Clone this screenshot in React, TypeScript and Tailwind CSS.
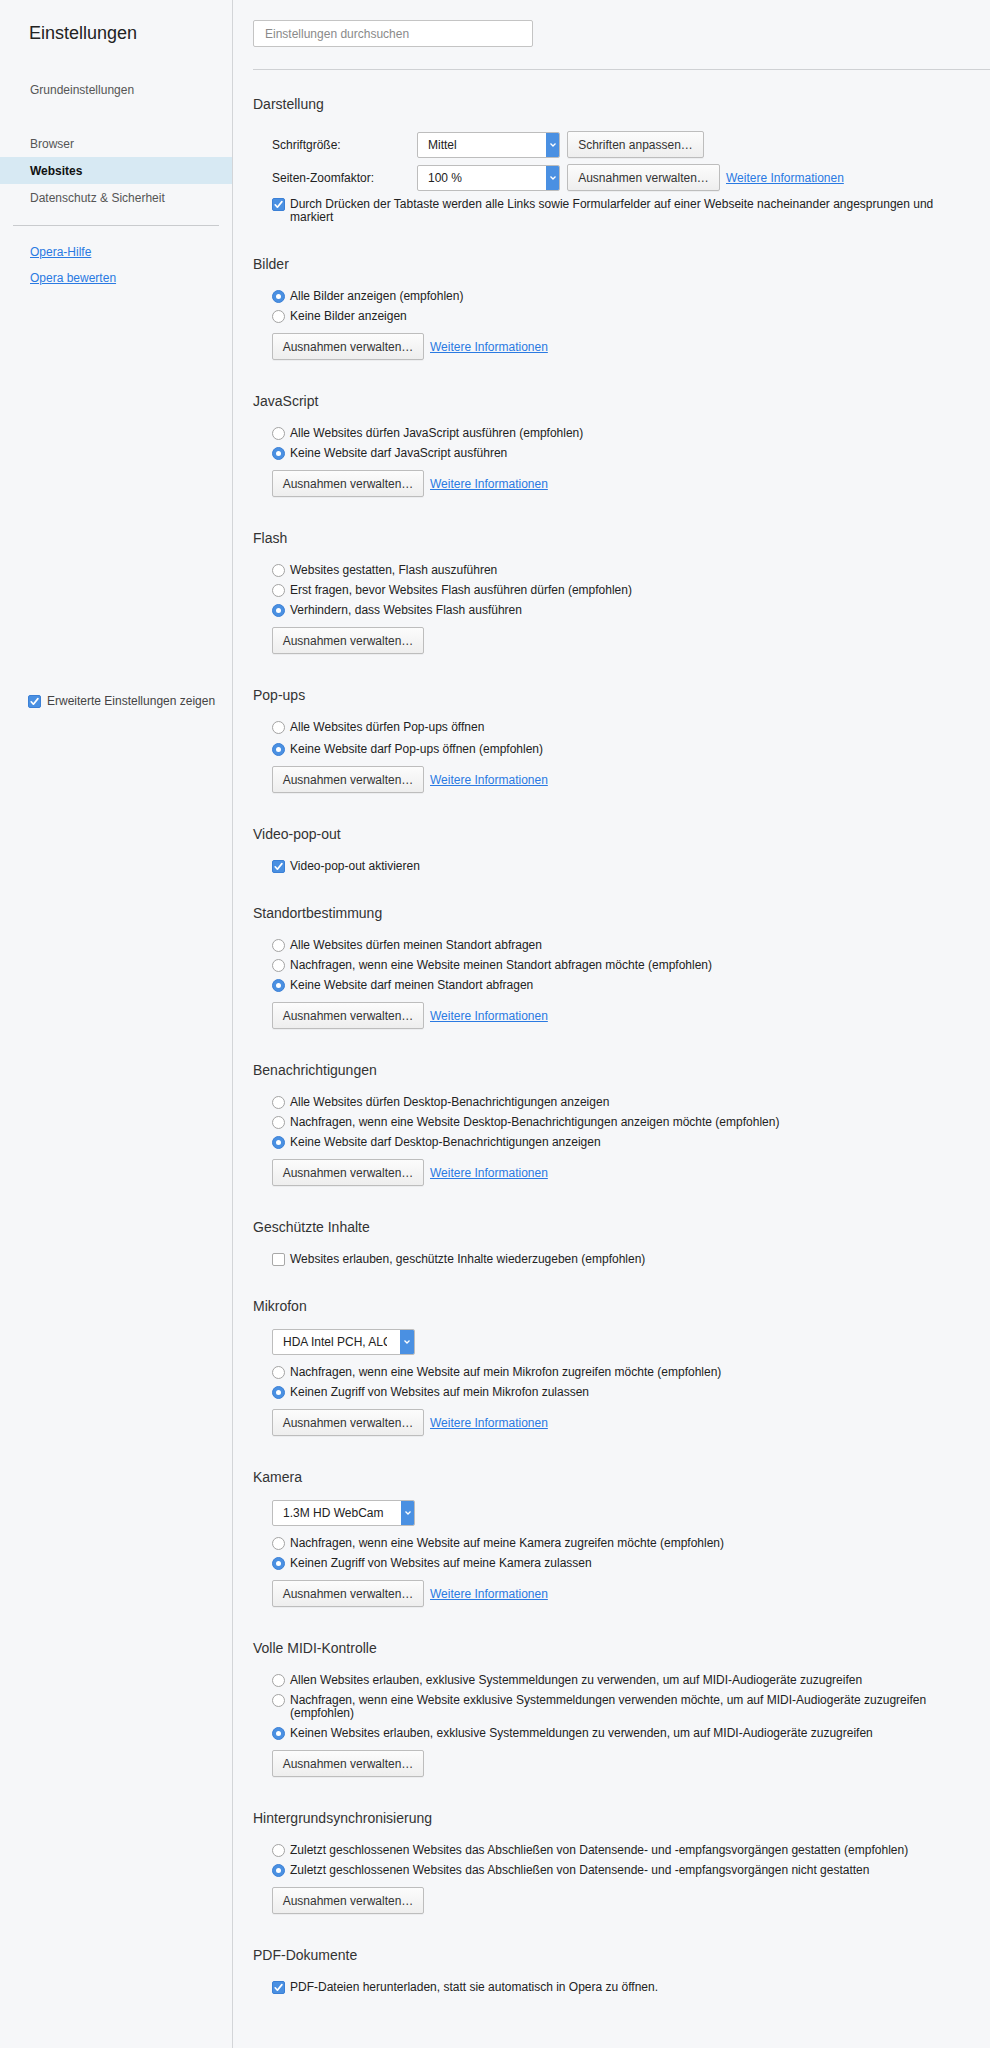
import React from "react";

type RowProps = { checked?: boolean; children: React.ReactNode; className?: string };

const Radio = ({ checked, children, className = "" }: RowProps) => (
  <div className={`flex items-start gap-[5px] py-[3.5px] leading-[13px] ${className}`}>
    <span
      className={
        checked
          ? "flex h-[13px] w-[13px] shrink-0 items-center justify-center rounded-full border border-[#3b80d6] bg-[#4a90e2]"
          : "h-[13px] w-[13px] shrink-0 rounded-full border border-[#a3a3a3] bg-white"
      }
    >
      {checked && <span className="h-[5px] w-[5px] rounded-full bg-white" />}
    </span>
    <span className="whitespace-nowrap">{children}</span>
  </div>
);

const Check = ({ checked }: { checked?: boolean }) =>
  checked ? (
    <span className="flex h-[13px] w-[13px] shrink-0 items-center justify-center rounded-[2px] border border-[#3b80d6] bg-[#4a90e2]">
      <svg width="11" height="11" viewBox="0 0 11 11">
        <path d="M2.2 5.8 L4.4 8.2 L8.9 2.6" fill="none" stroke="white" strokeWidth="1.7" strokeLinecap="round" strokeLinejoin="round" />
      </svg>
    </span>
  ) : (
    <span className="h-[13px] w-[13px] shrink-0 rounded-[2px] border border-[#a8a8a8] bg-white" />
  );

const CheckRow = ({ checked, children, className = "" }: RowProps) => (
  <div className={`flex items-start gap-[5px] py-[3.5px] leading-[13px] ${className}`}>
    <Check checked={checked} />
    <span className="whitespace-nowrap">{children}</span>
  </div>
);

const Button = ({ children, width = "w-[152px]" }: { children: React.ReactNode; width?: string }) => (
  <button
    className={`h-[27px] ${width} rounded-[2px] border border-[#bdbdbd] bg-linear-to-b from-[#fcfcfc] to-[#eeeeee] text-center text-[12px] text-[#333] shadow-[0_1px_0_rgba(0,0,0,0.04)]`}
  >
    {children}
  </button>
);

const Info = () => <a className="cursor-pointer text-[12px] text-[#2a7ae2] underline">Weitere Informationen</a>;

const Chevron = () => (
  <svg width="8" height="6" viewBox="0 0 8 6">
    <path d="M1.5 1.5 L4 4 L6.5 1.5" fill="none" stroke="white" strokeWidth="1.3" />
  </svg>
);

const Select = ({ value, textWidth = "w-[118px]" }: { value: string; textWidth?: string }) => (
  <div className="flex h-[26px] w-[143px] items-stretch overflow-hidden rounded-[2px] border border-[#bdbdbd] bg-white">
    <div className="flex flex-1 items-center pl-[10px]">
      <span className={`${textWidth} overflow-hidden whitespace-nowrap text-[12px] text-[#222]`}>{value}</span>
    </div>
    <div className="flex w-[14px] items-center justify-center bg-[#4a90e2]">
      <Chevron />
    </div>
  </div>
);

const Actions = ({ info = true }: { info?: boolean }) => (
  <div className="mb-[4px] mt-[7px] flex items-center gap-[6px]">
    <Button>Ausnahmen verwalten…</Button>
    {info && <Info />}
  </div>
);

const Section = ({ title, children, className = "mt-[27px]" }: { title: string; children: React.ReactNode; className?: string }) => (
  <section className={`flex flex-col ${className}`}>
    <h2 className="h-5 text-[14px] leading-5 text-[#333]">{title}</h2>
    <div className="mt-3 flex flex-col items-start pl-[19px] text-[12px] text-[#222]">{children}</div>
  </section>
);

const NavItem = ({ label, active }: { label: string; active?: boolean }) => (
  <div
    className={
      active
        ? "flex h-[27px] items-center bg-[#d7e9f3] pl-[30px] text-[12px] font-bold text-[#111]"
        : "flex h-[27px] items-center pl-[30px] text-[12px] text-[#555]"
    }
  >
    {label}
  </div>
);

export default function App() {
  return (
    <div className="flex min-h-screen bg-[#f6f7f9] font-['Liberation_Sans',Arial,sans-serif]">
      <aside className="w-[233px] shrink-0 border-r border-[#d3d5d8]">
        <h1 className="pl-[29px] pt-[22px] text-[18px] leading-[22px] text-[#222]">Einstellungen</h1>
        <nav className="mt-8">
          <NavItem label="Grundeinstellungen" />
          <div className="h-[27px]" />
          <NavItem label="Browser" />
          <NavItem label="Websites" active />
          <NavItem label="Datenschutz & Sicherheit" />
        </nav>
        <div className="mx-[13px] mt-[14px] h-px bg-[#c9cbce]" />
        <div className="mt-[13px]">
          <a className="flex h-[26px] items-center pl-[30px] text-[12px] text-[#2a7ae2] underline">Opera-Hilfe</a>
          <a className="flex h-[26px] items-center pl-[30px] text-[12px] text-[#2a7ae2] underline">Opera bewerten</a>
        </div>
        <div className="mt-[400px] flex h-5 items-center gap-[6px] pl-[28px] text-[12px] text-[#444]">
          <Check checked />
          <span>Erweiterte Einstellungen zeigen</span>
        </div>
      </aside>

      <main className="flex flex-1 flex-col pb-10 pl-[20px] pt-5">
        <input
          className="h-[27px] w-[280px] rounded-[2px] border border-[#c4c4c4] bg-white pl-[11px] text-[12px] text-[#222] placeholder:text-[#8a8a8a] outline-none"
          placeholder="Einstellungen durchsuchen"
        />
        <div className="mt-[22px] h-px bg-[#cfd1d4]" />

        <Section title="Darstellung" className="mt-6">
          <div className="mt-[5px] flex items-center">
            <span className="w-[145px]">Schriftgröße:</span>
            <Select value="Mittel" />
            <div className="ml-[7px]">
              <Button width="w-[137px]">Schriften anpassen…</Button>
            </div>
          </div>
          <div className="mt-[6px] flex items-center">
            <span className="w-[145px]">Seiten-Zoomfaktor:</span>
            <Select value="100 %" />
            <div className="ml-[7px] flex items-center gap-[6px]">
              <Button width="w-[153px]">Ausnahmen verwalten…</Button>
              <Info />
            </div>
          </div>
          <CheckRow checked className="mt-[3px]">
            Durch Drücken der Tabtaste werden alle Links sowie Formularfelder auf einer Webseite nacheinander angesprungen und
            <br />
            markiert
          </CheckRow>
        </Section>

        <Section title="Bilder">
          <Radio checked>Alle Bilder anzeigen (empfohlen)</Radio>
          <Radio>Keine Bilder anzeigen</Radio>
          <Actions />
        </Section>

        <Section title="JavaScript">
          <Radio>Alle Websites dürfen JavaScript ausführen (empfohlen)</Radio>
          <Radio checked>Keine Website darf JavaScript ausführen</Radio>
          <Actions />
        </Section>

        <Section title="Flash">
          <Radio>Websites gestatten, Flash auszuführen</Radio>
          <Radio>Erst fragen, bevor Websites Flash ausführen dürfen (empfohlen)</Radio>
          <Radio checked>Verhindern, dass Websites Flash ausführen</Radio>
          <Actions info={false} />
        </Section>

        <Section title="Pop-ups">
          <Radio>Alle Websites dürfen Pop-ups öffnen</Radio>
          <Radio checked className="mt-[2px]">
            Keine Website darf Pop-ups öffnen (empfohlen)
          </Radio>
          <Actions />
        </Section>

        <Section title="Video-pop-out">
          <CheckRow checked>Video-pop-out aktivieren</CheckRow>
        </Section>

        <Section title="Standortbestimmung">
          <Radio>Alle Websites dürfen meinen Standort abfragen</Radio>
          <Radio>Nachfragen, wenn eine Website meinen Standort abfragen möchte (empfohlen)</Radio>
          <Radio checked>Keine Website darf meinen Standort abfragen</Radio>
          <Actions />
        </Section>

        <Section title="Benachrichtigungen">
          <Radio>Alle Websites dürfen Desktop-Benachrichtigungen anzeigen</Radio>
          <Radio>Nachfragen, wenn eine Website Desktop-Benachrichtigungen anzeigen möchte (empfohlen)</Radio>
          <Radio checked>Keine Website darf Desktop-Benachrichtigungen anzeigen</Radio>
          <Actions />
        </Section>

        <Section title="Geschützte Inhalte">
          <CheckRow>Websites erlauben, geschützte Inhalte wiederzugeben (empfohlen)</CheckRow>
        </Section>

        <Section title="Mikrofon">
          <div className="mb-[7px] mt-[1px]">
            <Select value="HDA Intel PCH, ALC892 Analog" textWidth="w-[104px]" />
          </div>
          <Radio>Nachfragen, wenn eine Website auf mein Mikrofon zugreifen möchte (empfohlen)</Radio>
          <Radio checked>Keinen Zugriff von Websites auf mein Mikrofon zulassen</Radio>
          <Actions />
        </Section>

        <Section title="Kamera">
          <div className="mb-[7px] mt-[1px]">
            <Select value="1.3M HD WebCam" />
          </div>
          <Radio>Nachfragen, wenn eine Website auf meine Kamera zugreifen möchte (empfohlen)</Radio>
          <Radio checked>Keinen Zugriff von Websites auf meine Kamera zulassen</Radio>
          <Actions />
        </Section>

        <Section title="Volle MIDI-Kontrolle">
          <Radio>Allen Websites erlauben, exklusive Systemmeldungen zu verwenden, um auf MIDI-Audiogeräte zuzugreifen</Radio>
          <Radio>
            Nachfragen, wenn eine Website exklusive Systemmeldungen verwenden möchte, um auf MIDI-Audiogeräte zuzugreifen
            <br />
            (empfohlen)
          </Radio>
          <Radio checked>Keinen Websites erlauben, exklusive Systemmeldungen zu verwenden, um auf MIDI-Audiogeräte zuzugreifen</Radio>
          <Actions info={false} />
        </Section>

        <Section title="Hintergrundsynchronisierung">
          <Radio>Zuletzt geschlossenen Websites das Abschließen von Datensende- und -empfangsvorgängen gestatten (empfohlen)</Radio>
          <Radio checked>Zuletzt geschlossenen Websites das Abschließen von Datensende- und -empfangsvorgängen nicht gestatten</Radio>
          <Actions info={false} />
        </Section>

        <Section title="PDF-Dokumente">
          <CheckRow checked>PDF-Dateien herunterladen, statt sie automatisch in Opera zu öffnen.</CheckRow>
        </Section>
      </main>
    </div>
  );
}
